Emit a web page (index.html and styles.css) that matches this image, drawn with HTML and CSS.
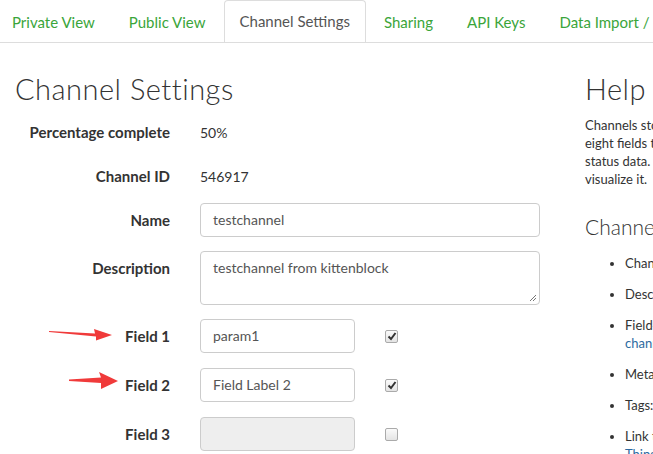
FILE: index.html
```html
<!DOCTYPE html>
<html>
<head>
<meta charset="utf-8">
<link rel="stylesheet" href="styles.css">
</head>
<body>
<nav class="tabs">
  <a class="tab">Private View</a>
  <a class="tab">Public View</a>
  <a class="tab active">Channel Settings</a>
  <a class="tab">Sharing</a>
  <a class="tab">API Keys</a>
  <a class="tab">Data Import / Export</a>
</nav>
<div class="page">
  <main class="main">
    <h1 class="title">Channel Settings</h1>
    <div class="form">
      <div class="row info"><span class="label">Percentage complete</span><span class="value">50%</span></div>
      <div class="row info"><span class="label">Channel ID</span><span class="value">546917</span></div>
      <div class="row"><span class="label">Name</span><div class="input wide">testchannel</div></div>
      <div class="row top"><span class="label">Description</span><div class="input wide area">testchannel from kittenblock<svg class="grip" width="8" height="8" viewBox="0 0 8 8"><path d="M7 1L1 7M7 4L4 7" stroke="#777" stroke-width="1"/></svg></div></div>
      <div class="row field"><span class="label">Field 1</span><div class="input short">param1</div><span class="check on"><svg width="10" height="10" viewBox="0 0 10 10"><path d="M1.5 5.5L4 8L8.5 2" stroke="#333" stroke-width="2" fill="none"/></svg></span>
        <svg class="arrow a1" width="64" height="12" viewBox="0 0 64 12"><polygon points="0,2 46,4.5 45,0 63,6 47,11.5 47,7.5 0,3" fill="#f03a3a"/></svg>
      </div>
      <div class="row field"><span class="label">Field 2</span><div class="input short">Field Label 2</div><span class="check on"><svg width="10" height="10" viewBox="0 0 10 10"><path d="M1.5 5.5L4 8L8.5 2" stroke="#333" stroke-width="2" fill="none"/></svg></span>
        <svg class="arrow a2" width="50" height="18" viewBox="0 0 50 18"><polygon points="0,7.5 32,5.5 30,0 49,9 32,17 32,11 0,9" fill="#f03a3a"/></svg>
      </div>
      <div class="row field"><span class="label">Field 3</span><div class="input short disabled"></div><span class="check"></span></div>
    </div>
  </main>
  <aside class="help">
    <h2 class="help-title">Help</h2>
    <p class="help-text"><span class="line">Channels store all the data that a ThingSpeak application collects. Each channel includes</span><span class="line">eight fields that can hold any type of data, plus three fields for location data and one for</span><span class="line">status data. Once you collect data in a channel, you can use ThingSpeak apps to analyze and</span><span class="line">visualize it.</span></p>
    <h3 class="help-sub">Channel Settings</h3>
    <ul class="help-list">
      <li><span class="line">Channel Name: Enter a unique name for the ThingSpeak channel.</span></li>
      <li><span class="line">Description: Enter a description of the ThingSpeak channel.</span></li>
      <li><span class="line">Field#: Check the box to enable the field, and enter a field name. Each ThingSpeak</span><span class="line"><a class="link">channel</a> can have up to 8 fields.</span></li>
      <li><span class="line">Metadata: Enter information about channel data, including JSON, XML, or CSV data.</span></li>
      <li><span class="line">Tags: Enter keywords that identify the channel.</span></li>
      <li><span class="line">Link to External Site: If you have a website that contains information about your</span><span class="line"><a class="link">ThingSpeak</a> channel, specify the URL.</span></li>
    </ul>
  </aside>
</div>
</body>
</html>
```
FILE: styles.css
```css
* { box-sizing: border-box; }
html, body { margin: 0; padding: 0; background: #fff; }
body {
  font-family: "Lato", "Open Sans", sans-serif;
  color: #333;
  width: 653px;
  height: 454px;
  overflow: hidden;
}
.tabs {
  display: flex;
  height: 43px;
  border-bottom: 1px solid #ddd;
  white-space: nowrap;
  overflow: hidden;
}
.tab {
  font-size: 15px;
  color: #3aa53a;
  padding: 12px 15px 0 15px;
  height: 43px;
  margin-right: 2px;
  border: 1px solid transparent;
  border-radius: 4px 4px 0 0;
  flex: none;
}
.tab:first-child { margin-left: -4px; }
.tab.active {
  color: #555;
  border-color: #ddd;
  border-bottom-color: #fff;
  background: #fff;
  padding-top: 11px;
  height: 44px;
}
.page {
  display: flex;
  padding-left: 15px;
}
.main { width: 570px; flex: none; }
.title {
  font-family: "Lato", sans-serif;
  font-weight: 300;
  font-size: 29px;
  letter-spacing: 0.5px;
  margin: 29px 0 0 0;
  line-height: 34px;
  color: #333;
}
.form {
  display: flex;
  flex-direction: column;
  margin-top: 9px;
}
.row {
  display: flex;
  align-items: center;
  position: relative;
  min-height: 34px;
  margin-bottom: 14px;
  font-size: 15px;
}
.row.info { margin-bottom: 10px; }
.row.top { align-items: flex-start; }
.row.top .label { padding-top: 8px; }
.label {
  width: 155px;
  text-align: right;
  font-weight: 700;
  color: #333;
  flex: none;
  margin-right: 30px;
}
.value { font-size: 14px; }
.input {
  height: 34px;
  border: 1px solid #ccc;
  border-radius: 4px;
  padding: 7px 12px;
  font-size: 14px;
  color: #555;
  background: #fff;
  position: relative;
}
.input.wide { width: 340px; }
.input.area { height: 54px; }
.input.short { width: 155px; height: 34px; }
.input.disabled { background: #eee; }
.row.field { margin-bottom: 15px; }
.grip { position: absolute; right: 2px; bottom: 2px; }
.check {
  width: 13px;
  height: 13px;
  border: 1px solid #aaa;
  border-radius: 2px;
  background: linear-gradient(#fafafa, #e4e4e4);
  margin-left: 30px;
  display: flex;
  align-items: center;
  justify-content: center;
}
.arrow { position: absolute; }
.a1 { left: 34px; top: 10px; }
.a2 { left: 54px; top: 4px; }
.help { width: 600px; flex: none; }
.help-title {
  font-family: "Lato", sans-serif;
  font-weight: 300;
  font-size: 29px;
  letter-spacing: 0.5px;
  margin: 29px 0 0 0;
  line-height: 34px;
}
.line { display: block; white-space: nowrap; }
.help-text {
  font-size: 13px;
  line-height: 18px;
  margin: 10px 0 0 0;
}
.help-sub {
  font-family: "Lato", sans-serif;
  font-weight: 300;
  font-size: 21px;
  margin: 26px 0 0 0;
  line-height: 26px;
}
.help-list {
  margin: 14px 0 0 0;
  padding-left: 40px;
  font-size: 13px;
  line-height: 18px;
}
.help-list li { margin-bottom: 13px; }
.link { color: #2c6aa0; }
```
